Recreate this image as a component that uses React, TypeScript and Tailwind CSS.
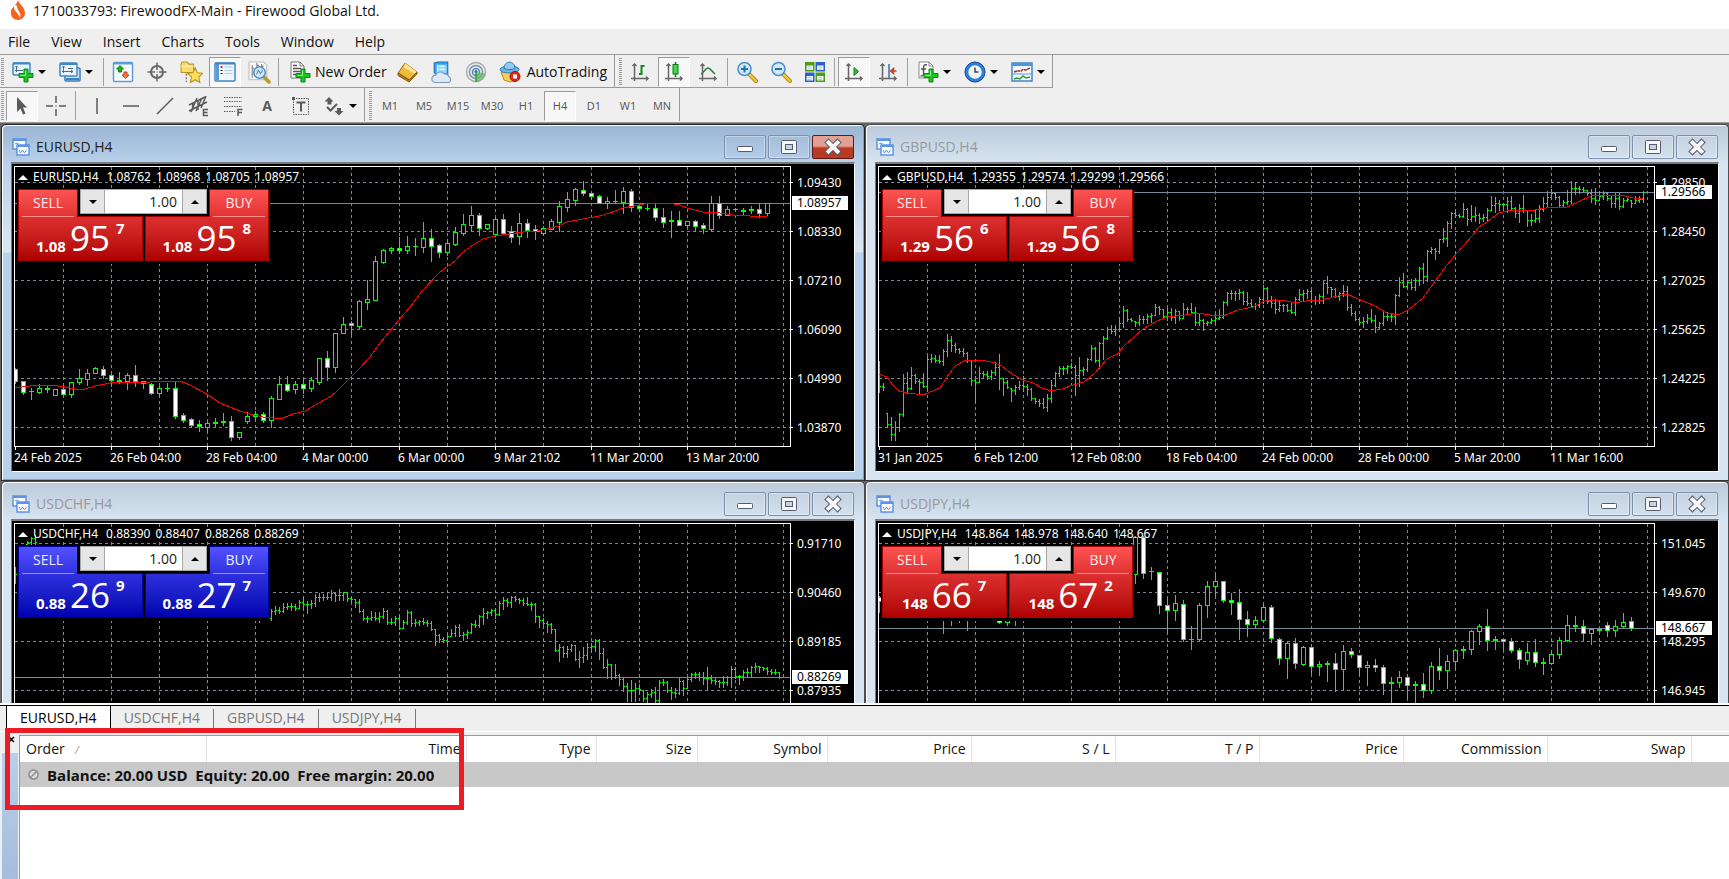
import type { ReactNode } from "react";
import clsx from "clsx";

// high, low, body top, body bottom, falling (1) or rising (0) - one candle every 8px
type Candle = [number, number, number, number, number];
// slot, high, low, close - one bar every 4px
type Bar = [number, number, number, number];

interface ChartInterface {
  symbol: string;
  quote: string[];
  prices: string[];
  current: string;
  currentY: number;
  dates: string[];
  bid: [string, string, string];
  ask: [string, string, string];
  color: "red" | "blue";
  active?: boolean;
  candles?: [number, Candle][];
  bars?: Bar[];
  average?: string;
}

const withSlots = (start: number, list: Candle[]): [number, Candle][] => list.map((c, i) => [start + i, c]);

const triples = (start: number, list: number[]): Bar[] => {
  const bars: Bar[] = [];
  for (let i = 0; i < list.length; i += 3) bars.push([start + i / 3, list[i], list[i + 1], list[i + 2]]);
  return bars;
};

const eurusd: Candle[] = [
  [201, 216, 202, 214, 1], [214, 227, 214, 225, 1], [221, 232, 224, 224, 0], [217, 226, 221, 225, 0], [219, 225, 221, 222, 0],
  [222, 228, 222, 228, 0], [220, 228, 222, 227, 1], [215, 230, 215, 227, 0], [202, 217, 211, 215, 0], [202, 218, 206, 212, 0],
  [200, 206, 201, 206, 0], [199, 211, 202, 208, 1], [207, 219, 208, 213, 1], [205, 216, 213, 214, 1], [206, 222, 208, 214, 0],
  [198, 219, 208, 214, 1], [214, 221, 214, 216, 1], [216, 227, 217, 226, 1], [219, 229, 221, 226, 0], [216, 224, 221, 221, 0],
  [215, 251, 221, 249, 1], [246, 255, 248, 253, 1], [251, 260, 252, 258, 1], [253, 264, 257, 259, 1], [254, 264, 256, 260, 0],
  [251, 259, 255, 256, 0], [246, 258, 254, 255, 0], [249, 273, 254, 270, 1], [265, 272, 265, 270, 0], [245, 256, 249, 254, 0],
  [244, 254, 247, 249, 0], [245, 255, 247, 253, 1], [229, 260, 231, 253, 0], [209, 232, 217, 232, 0], [209, 224, 217, 223, 1],
  [214, 226, 217, 222, 0], [211, 226, 217, 221, 1], [210, 224, 213, 221, 0], [191, 217, 191, 215, 0], [184, 213, 191, 200, 1],
  [166, 205, 166, 200, 0], [150, 166, 157, 166, 0], [154, 167, 156, 158, 1], [133, 161, 134, 159, 0], [113, 142, 132, 135, 0],
  [89, 133, 94, 133, 0], [82, 96, 83, 95, 0], [80, 86, 81, 83, 0], [70, 86, 81, 83, 1], [69, 86, 79, 83, 0],
  [71, 88, 79, 79, 0], [55, 85, 71, 80, 0], [62, 94, 71, 79, 1], [77, 90, 78, 85, 1], [72, 88, 76, 85, 0],
  [60, 78, 65, 77, 0], [47, 68, 57, 66, 0], [39, 64, 48, 58, 0], [46, 68, 48, 61, 1], [57, 62, 57, 61, 0],
  [50, 69, 52, 67, 0], [47, 66, 52, 66, 1], [59, 75, 64, 70, 1], [46, 77, 56, 69, 0], [52, 70, 56, 63, 1],
  [58, 72, 62, 64, 1], [59, 68, 61, 66, 0], [52, 62, 54, 62, 0], [34, 64, 39, 55, 0], [25, 44, 32, 40, 0],
  [21, 38, 22, 33, 0], [14, 28, 23, 26, 1], [25, 32, 26, 29, 1], [28, 36, 29, 36, 1], [30, 41, 34, 36, 0],
  [23, 36, 34, 34, 0], [20, 46, 24, 35, 0], [22, 44, 24, 40, 1], [37, 44, 39, 41, 1], [36, 43, 41, 41, 0],
  [37, 53, 41, 50, 1], [41, 60, 50, 55, 1], [44, 70, 53, 54, 0], [44, 58, 53, 58, 1], [54, 60, 54, 58, 0],
  [53, 64, 54, 59, 1], [56, 66, 58, 61, 1], [29, 64, 36, 62, 0], [29, 51, 36, 48, 1], [39, 48, 42, 48, 0],
  [41, 44, 42, 42, 0], [41, 47, 43, 44, 0], [39, 46, 42, 43, 0], [37, 50, 42, 46, 1], [36, 48, 36, 46, 0],
];

const eurusdAverage =
  "0,221 15,219 25,218 35,218 50,220 60,222 70,222 80,219 95,216 110,215 125,216 145,214 165,214 175,218 190,226 205,236 225,244 235,247 248,250 258,251 268,251 278,247 290,244 302,237 313,231 320,226 335,211 345,201 355,190 365,176 384,153 395,140 408,123 424,106 440,94 448,85 458,78 468,72 480,69 495,67 508,65 522,64 532,62 544,59 552,55 568,52 584,49 595,46 608,41 624,38 635,36 652,36 665,38 672,41 688,45 705,46 718,48 735,49 747,50 752,49";

const gbpusd = triples(0, [
  194, 225, 219, 216, 223, 220, 246, 260, 257, 250, 273, 267, 254, 273, 260, 246, 264, 247, 207, 249, 216, 205, 226, 221,
  200, 222, 208, 207, 216, 214, 212, 227, 215, 206, 220, 219, 189, 224, 192, 187, 195, 191, 188, 195, 193, 188, 196, 194,
  182, 198, 184, 167, 189, 173, 169, 184, 178, 176, 185, 182, 181, 186, 184, 181, 189, 186, 185, 195, 193, 193, 218, 213,
  209, 235, 215, 200, 215, 206, 204, 210, 207, 204, 212, 209, 203, 212, 205, 195, 208, 200, 187, 222, 211, 211, 228, 215,
  213, 221, 220, 221, 234, 223, 218, 227, 220, 214, 222, 218, 209, 224, 219, 217, 228, 222, 221, 233, 231, 231, 236, 234,
  232, 239, 236, 231, 241, 240, 227, 244, 231, 213, 235, 218, 205, 219, 206, 199, 209, 201, 199, 207, 201, 198, 206, 199,
  196, 201, 200, 198, 228, 208, 190, 219, 203, 200, 208, 202, 191, 204, 192, 178, 193, 181, 180, 195, 193, 175, 201, 176,
  169, 192, 171, 160, 172, 162, 158, 166, 164, 158, 168, 162, 150, 163, 156, 139, 160, 143, 142, 154, 152, 151, 154, 153,
  154, 159, 155, 148, 158, 152, 149, 156, 152, 147, 156, 149, 146, 155, 148, 137, 148, 140, 139, 147, 142, 142, 151, 149,
  141, 153, 145, 141, 153, 150, 142, 156, 144, 144, 153, 151, 136, 151, 142, 140, 146, 142, 136, 146, 145, 140, 158, 155,
  147, 158, 153, 152, 163, 156, 154, 158, 155, 151, 156, 153, 146, 155, 151, 142, 152, 150, 134, 151, 135, 125, 138, 126,
  123, 132, 126, 124, 133, 126, 122, 132, 125, 124, 137, 134, 125, 138, 136, 132, 140, 139, 136, 142, 138, 130, 140, 132,
  118, 136, 121, 120, 136, 134, 129, 140, 136, 132, 146, 142, 133, 144, 138, 137, 144, 138, 137, 144, 143, 135, 146, 145,
  130, 148, 132, 122, 133, 127, 123, 133, 126, 122, 131, 124, 122, 135, 133, 129, 137, 133, 127, 136, 129, 114, 136, 116,
  109, 126, 120, 120, 129, 122, 121, 130, 129, 125, 133, 126, 118, 129, 124, 119, 143, 140, 137, 148, 146, 144, 153, 152,
  150, 157, 155, 150, 160, 154, 147, 156, 151, 142, 155, 153, 148, 165, 160, 155, 161, 156, 145, 158, 149, 145, 153, 149,
  146, 154, 149, 127, 157, 128, 110, 129, 115, 106, 120, 119, 113, 122, 115, 112, 122, 120, 111, 123, 113, 100, 118, 101,
  96, 116, 109, 83, 114, 84, 80, 86, 82, 81, 92, 84, 72, 86, 72, 61, 75, 71, 54, 79, 56, 45, 61, 46,
  42, 50, 48, 47, 50, 49, 36, 50, 42, 41, 58, 52, 38, 54, 49, 40, 54, 48, 46, 56, 51, 47, 54, 50,
  41, 53, 43, 29, 43, 38, 30, 45, 36, 33, 43, 37, 36, 42, 37, 30, 45, 34, 29, 42, 41, 40, 50, 46,
  37, 55, 41, 28, 45, 43, 43, 59, 53, 47, 58, 53, 43, 55, 51, 38, 55, 42, 30, 44, 36, 24, 39, 30,
  22, 32, 26, 26, 32, 30, 29, 40, 38, 33, 40, 35, 23, 37, 34, 14, 37, 21, 15, 27, 21, 19, 26, 22,
  20, 25, 23, 23, 28, 26, 22, 35, 31, 21, 37, 33, 25, 33, 29, 24, 32, 26, 25, 33, 31, 29, 40, 36,
  26, 40, 31, 26, 42, 39, 31, 40, 33, 31, 34, 32, 33, 40, 36, 29, 36, 33, 29, 35, 32, 24, 35, 25,
]);

const gbpusdAverage =
  "0,207 8,210 14,218 20,224 29,226 44,228 49,226 61,221 68,210 76,199 87,193 103,193 116,196 123,199 133,207 144,213 154,216 163,221 172,224 183,222 194,218 205,215 216,206 228,192 238,187 246,178 264,162 278,154 288,150 306,148 318,146 331,148 344,149 359,143 374,140 388,133 403,133 416,136 432,133 444,133 454,130 468,127 479,132 494,138 508,146 519,148 529,143 544,131 554,117 568,98 578,86 593,69 600,60 608,55 620,46 632,43 656,43 672,40 688,40 699,35 712,29 728,28 746,29 759,32 764,31";

const usdchf: Bar[] = [
  ...triples(0, [43, 59, 50]),
  ...triples(3, [17, 20, 18, 13, 20, 14, 11, 20, 18]),
  ...triples(61, [90, 98, 94]),
  ...triples(64, [
    85, 96, 87, 82, 90, 86, 83, 89, 87, 79, 88, 83, 79, 85, 82, 79, 86, 82, 80, 86, 84, 76, 84, 78,
    73, 85, 80, 77, 89, 80, 76, 84, 79, 70, 82, 73, 69, 77, 73, 70, 76, 73, 68, 75, 73, 66, 76, 69,
    68, 77, 71, 65, 76, 71, 68, 76, 68, 68, 77, 74, 73, 78, 75, 75, 83, 78, 75, 88, 87, 85, 96, 94,
    92, 98, 94, 87, 96, 93, 88, 96, 94, 88, 98, 92, 84, 94, 87, 86, 100, 98, 94, 100, 98, 92, 101, 94,
    91, 105, 104, 96, 104, 98, 86, 100, 88, 87, 102, 99, 95, 102, 98, 96, 101, 97, 94, 100, 98, 96, 102, 99,
    97, 106, 105, 105, 121, 111, 110, 118, 115, 113, 118, 116, 111, 120, 112, 105, 112, 109, 101, 112, 103, 100, 112, 111,
    108, 116, 110, 106, 114, 108, 99, 109, 100, 96, 103, 101, 91, 103, 92, 84, 100, 89, 87, 94, 88, 85, 91, 86,
    84, 94, 90, 77, 91, 79, 73, 85, 76, 74, 82, 78, 72, 83, 73, 72, 77, 75, 74, 79, 76, 74, 81, 79,
    73, 81, 80, 78, 86, 80, 79, 98, 92, 92, 103, 96, 94, 104, 99, 97, 108, 100, 99, 109, 105, 105, 127, 126,
    120, 137, 123, 122, 133, 129, 122, 133, 125, 120, 127, 121, 121, 136, 135, 127, 143, 133, 123, 138, 131, 119, 135, 123,
    119, 128, 122, 115, 127, 116, 115, 135, 129, 124, 144, 143, 135, 154, 140, 140, 155, 153, 140, 154, 151, 150, 161, 155,
    153, 167, 162, 159, 177, 166, 156, 177, 166, 159, 177, 164, 160, 170, 165, 166, 177, 174, 168, 178, 170, 165, 173, 168,
    163, 179, 176, 156, 179, 158, 155, 161, 158, 157, 168, 166, 163, 175, 168, 164, 173, 169, 154, 170, 157, 156, 171, 164,
    154, 164, 155, 149, 157, 150, 148, 154, 150, 148, 156, 153, 148, 160, 154, 143, 165, 154, 151, 159, 156, 154, 160, 157,
    156, 163, 158, 152, 163, 158, 152, 161, 153, 142, 163, 145, 143, 154, 152, 151, 160, 152, 146, 156, 148, 144, 152, 148,
    142, 152, 143, 139, 148, 142, 142, 148, 143, 143, 146, 144, 143, 150, 147, 145, 150, 148, 145, 150, 148, 148, 154, 153,
  ]),
];

const usdjpy: [number, Candle][] = [
  ...withSlots(0, [[72, 88, 73, 77, 1]]),
  ...withSlots(8, [[90, 109, 90, 90, 0], [90, 101, 90, 90, 0], [90, 98, 90, 90, 0], [90, 106, 90, 90, 0]]),
  ...withSlots(15, [[90, 99, 90, 98, 1], [96, 101, 96, 98, 0], [90, 101, 96, 96, 0]]),
  ...withSlots(32, [
    [13, 59, 13, 50, 0], [12, 54, 13, 49, 1], [43, 55, 47, 47, 0], [48, 89, 48, 81, 1], [74, 108, 81, 86, 1],
    [71, 96, 79, 86, 0], [76, 117, 80, 115, 1], [102, 125, 115, 115, 0], [79, 117, 81, 115, 0], [57, 93, 62, 81, 0],
    [50, 71, 57, 62, 0], [57, 78, 57, 76, 1], [69, 90, 76, 78, 1], [65, 115, 78, 95, 1], [87, 112, 95, 100, 1],
    [92, 103, 96, 100, 0], [80, 98, 83, 96, 0], [81, 118, 83, 114, 1], [114, 140, 115, 134, 1], [117, 154, 119, 134, 0],
    [114, 144, 119, 139, 1], [122, 141, 123, 140, 0], [122, 149, 123, 142, 1], [137, 151, 140, 142, 0], [137, 157, 139, 140, 0],
    [129, 167, 139, 145, 1], [121, 166, 127, 145, 0], [124, 133, 127, 130, 1], [131, 151, 131, 143, 1], [137, 161, 141, 143, 0],
    [135, 147, 141, 143, 1], [141, 170, 143, 159, 1], [153, 178, 158, 159, 0], [147, 163, 153, 158, 0], [150, 174, 153, 161, 1],
    [157, 179, 160, 161, 0], [149, 173, 160, 166, 1], [138, 169, 142, 166, 0], [124, 155, 142, 146, 1], [131, 164, 137, 146, 0],
    [125, 145, 126, 137, 0], [122, 134, 125, 126, 0], [106, 130, 107, 125, 0], [100, 120, 102, 107, 0], [85, 126, 102, 116, 1],
    [112, 125, 115, 116, 0], [115, 125, 115, 117, 1], [114, 128, 117, 126, 1], [124, 144, 126, 135, 1], [119, 140, 128, 136, 0],
    [115, 142, 128, 138, 1], [134, 150, 138, 139, 0], [128, 140, 130, 139, 0], [113, 134, 116, 130, 0], [91, 117, 101, 116, 0],
    [92, 107, 101, 102, 0], [96, 116, 102, 109, 1], [104, 120, 105, 109, 0], [104, 107, 105, 106, 0], [98, 112, 101, 106, 1],
    [96, 112, 102, 106, 0], [89, 103, 98, 102, 0], [93, 106, 97, 104, 1],
  ]),
];

const charts: ChartInterface[] = [
  {
    symbol: "EURUSD,H4",
    quote: ["1.08762", "1.08968", "1.08705", "1.08957"],
    prices: ["1.09430", "1.08330", "1.07210", "1.06090", "1.04990", "1.03870"],
    current: "1.08957",
    currentY: 36,
    dates: ["24 Feb 2025", "26 Feb 04:00", "28 Feb 04:00", "4 Mar 00:00", "6 Mar 00:00", "9 Mar 21:02", "11 Mar 20:00", "13 Mar 20:00"],
    bid: ["1.08", "95", "7"],
    ask: ["1.08", "95", "8"],
    color: "red",
    active: true,
    candles: withSlots(0, eurusd),
    average: eurusdAverage,
  },
  {
    symbol: "GBPUSD,H4",
    quote: ["1.29355", "1.29574", "1.29299", "1.29566"],
    prices: ["1.29850", "1.28450", "1.27025", "1.25625", "1.24225", "1.22825"],
    current: "1.29566",
    currentY: 25,
    dates: ["31 Jan 2025", "6 Feb 12:00", "12 Feb 08:00", "18 Feb 04:00", "24 Feb 00:00", "28 Feb 00:00", "5 Mar 20:00", "11 Mar 16:00"],
    bid: ["1.29", "56", "6"],
    ask: ["1.29", "56", "8"],
    color: "red",
    bars: gbpusd,
    average: gbpusdAverage,
  },
  {
    symbol: "USDCHF,H4",
    quote: ["0.88390", "0.88407", "0.88268", "0.88269"],
    prices: ["0.91710", "0.90460", "0.89185", "0.87935"],
    current: "0.88269",
    currentY: 153,
    dates: [],
    bid: ["0.88", "26", "9"],
    ask: ["0.88", "27", "7"],
    color: "blue",
    bars: usdchf,
  },
  {
    symbol: "USDJPY,H4",
    quote: ["148.864", "148.978", "148.640", "148.667"],
    prices: ["151.045", "149.670", "148.295", "146.945"],
    current: "148.667",
    currentY: 104,
    dates: [],
    bid: ["148", "66", "7"],
    ask: ["148", "67", "2"],
    color: "red",
    candles: usdjpy,
  },
];

const Icon = ({ children, size = 22 }: { children: ReactNode; size?: number }) => (
  <svg width={size} height={size} viewBox="0 0 22 22" fill="none" className="shrink-0" aria-hidden="true">
    {children}
  </svg>
);

const Plus = () => (
  <g>
    <path d="M12 8h4v4.500h5v4h-5V21h-4v-4.500H7v-4h5z" fill="#1fc21f" stroke="#0b8a12" />
    <path d="M13.500 9.500v5H8.500" stroke="#8df58d" />
  </g>
);

const ChartAxes = () => (
  <g stroke="#666" strokeWidth="1.500">
    <path d="M5.500 3v17M2 17.500h17" />
    <path d="M3.500 5L5.500 3l2 2M17 15.500l2 2-2 2" />
  </g>
);

const Magnifier = ({ plus }: { plus?: boolean }) => (
  <Icon>
    <path d="M13.500 13.500l6.500 6.500" stroke="#b8860b" strokeWidth="4" strokeLinecap="round" />
    <path d="M13.500 13.500l6.500 6.500" stroke="#f7cf3e" strokeWidth="2" strokeLinecap="round" />
    <circle cx="8.500" cy="8" r="6.500" fill="#cfeafb" stroke="#4c8fc9" strokeWidth="1.500" />
    <path d={plus ? "M5 8h7M8.500 4.500v7" : "M5 8h7"} stroke="#2670b0" strokeWidth="2" />
  </Icon>
);

const NewChartIcon = () => (
  <Icon>
    <rect x="1" y="2" width="17" height="12" rx="1" fill="#e9f3fc" stroke="#3f86c6" strokeWidth="1.500" />
    <path d="M1 2.500h17" stroke="#3f86c6" strokeWidth="2" />
    <path d="M4.500 5v6M3 9.500h8M3 6.500L4.500 5 6 6.500" stroke="#4b6b8c" />
    <Plus />
  </Icon>
);

const ProfilesIcon = () => (
  <Icon>
    <rect x="6" y="7" width="15" height="13" rx="1" fill="#cfe2f4" stroke="#3f7fbe" strokeWidth="1.500" />
    <path d="M7 18h13" stroke="#3f7fbe" strokeWidth="2" />
    <rect x="1" y="2" width="17" height="13" rx="1" fill="#eef6fd" stroke="#3f86c6" strokeWidth="1.500" />
    <path d="M1 3h17" stroke="#3f86c6" strokeWidth="2" />
    <path d="M4.500 5v7M3 10.500h11M3 6.500L4.500 5 6 6.500M12 9l2 1.500-2 1.500M9 7.500h5" stroke="#4b6b8c" />
  </Icon>
);

const MarketWatchIcon = () => (
  <Icon>
    <rect x="1.500" y="1.500" width="19" height="19" rx="1" fill="#fff" stroke="#5b9bd8" strokeWidth="1.500" />
    <path d="M2 2.500h18" stroke="#5b9bd8" strokeWidth="2" />
    <path d="M4 7h14M4 10h14M4 13h14M4 16h14" stroke="#dbe8f5" />
    <path d="M8 4.500l3.500 3.500H9.500v3h-3V8h-2z" fill="#25b325" stroke="#0b7a12" />
    <path d="M13.500 17.500l3.500-3.500h-2v-3h-3v3h-2z" fill="#ff7a45" stroke="#c83a10" />
  </Icon>
);

const TargetIcon = () => (
  <Icon>
    <circle cx="11" cy="11" r="6" stroke="#666" strokeWidth="2" />
    <path d="M11 1.500v7.500M11 13v7.500M1.500 11H9M13 11h7.500" stroke="#666" strokeWidth="1.500" />
    <path d="M10.500 11h1" stroke="#666" />
  </Icon>
);

const FavouritesIcon = () => (
  <Icon size={23}>
    <path d="M1 3l1-2h5l1.500 2H13v8H1z" fill="#f8dc6c" stroke="#b8922a" />
    <path d="M1 5h12" stroke="#fff2b0" />
    <path d="M6 12v8" stroke="#555" strokeDasharray="2 1.500" />
    <path d="M14.500 6.500l2.200 4.700 5 .6-3.700 3.500 1 5.200-4.500-2.600L10 20.500l1-5.200-3.700-3.500 5-.6z" fill="#ffdf5a" stroke="#b8922a" />
  </Icon>
);

const NavigatorIcon = () => (
  <Icon>
    <rect x="1" y="2" width="20" height="18" rx="1" fill="#fff" stroke="#3f86c6" strokeWidth="1.500" />
    <path d="M8 3h12v16H8z" fill="#eef5fc" />
    <path d="M2 3h3v16H2z" fill="#5b9bd8" />
    <path d="M1 2.500h20" stroke="#3f86c6" strokeWidth="2" />
    <rect x="6.500" y="5" width="2" height="2" fill="#e0262c" />
    <path d="M6.500 9.500h2M6.500 12.500h2" stroke="#222" />
    <path d="M10.500 6h8M10.500 9.500h8M10.500 12.500h8" stroke="#a9c9ea" />
  </Icon>
);

const TesterIcon = () => (
  <Icon size={23}>
    <path d="M1 1h14l3 3v14H1z" fill="#fafafa" stroke="#bbb" />
    <path d="M4 4v12M4 7h2M8.500 2v8M8.500 4h2M13 3v9M13 5h2" stroke="#777" />
    <path d="M15 15l5 5" stroke="#c79a1c" strokeWidth="3.500" strokeLinecap="round" />
    <circle cx="11" cy="11" r="5.500" fill="#cfe6fa" fillOpacity=".85" stroke="#4c8fc9" strokeWidth="1.500" />
    <path d="M8 13l2-4 2 3 2-3" stroke="#5a8fc0" />
  </Icon>
);

const OrderIcon = () => (
  <Icon>
    <path d="M2 1h9l4 4v12H2z" fill="#fff" stroke="#777" />
    <path d="M11 1v4h4" stroke="#777" />
    <path d="M4 4.500h4M4 7.500h8M4 10.500h8M4 13.500h5" stroke="#555" strokeWidth="1.500" />
    <Plus />
  </Icon>
);

const MetaEditorIcon = () => (
  <Icon>
    <path d="M8 2l12 9-7 8L1 12z" fill="#eebb3c" stroke="#9c6d10" />
    <path d="M8 2l12 9-3 1.500L7 6.500z" fill="#fbe392" />
    <path d="M1 12v2.500L12 21l8-8v-2l-8 8z" fill="#b87a14" stroke="#8a5d0c" />
  </Icon>
);

const MarketIcon = () => (
  <Icon size={23}>
    <path d="M4 2l3-1h10v12H6l-2-2z" fill="#2da2f0" stroke="#1b72b8" />
    <path d="M7 3.500h9v8H7z" fill="#9ad6fb" />
    <path d="M9 5h5M9 8h5M7 3.500v9" stroke="#fff" />
    <path d="M5 20.500a3.500 3.500 0 01.5-7 5 5 0 018.500-1 4 4 0 014 2.500 3 3 0 010 5.500z" fill="#dfe9f5" stroke="#7d98bd" />
  </Icon>
);

const SignalIcon = () => (
  <Icon>
    <circle cx="11" cy="11" r="9.500" fill="#e9edf0" stroke="#a3adb3" strokeWidth="1.500" />
    <circle cx="11" cy="11" r="6.500" stroke="#84929c" strokeWidth="1.500" />
    <circle cx="11" cy="11" r="3.500" stroke="#4f87c0" strokeWidth="1.500" />
    <path d="M11 11v10c5-.5 8.500-4 9.500-8.500z" fill="#5dbb5d" fillOpacity=".7" />
    <circle cx="11" cy="10.500" r="1.500" fill="#2a6fc0" />
    <path d="M11 11v10" stroke="#28a428" strokeWidth="1.500" />
  </Icon>
);

const AutoTradingIcon = () => (
  <Icon>
    <path d="M2 11l3 8 6 2 6-2 2-8z" fill="#f6cf55" stroke="#b58a1e" />
    <ellipse cx="10.500" cy="8.500" rx="9.500" ry="3.500" fill="#6eb5e6" stroke="#2f7ab5" />
    <path d="M5 7.500c0-8.500 11-8.500 11 0-3 1.500-8 1.500-11 0z" fill="#8ccaf2" stroke="#2f7ab5" />
    <circle cx="16" cy="15.500" r="5" fill="#e0291d" stroke="#a31109" />
    <rect x="14" y="13.500" width="4" height="4" fill="#fff" />
  </Icon>
);

const BarChartIcon = () => (
  <Icon>
    <ChartAxes />
    <path d="M12.500 4v10M12.500 5h3M10 13h2.500" stroke="#148a1e" strokeWidth="2" />
  </Icon>
);

const CandleChartIcon = () => (
  <Icon>
    <ChartAxes />
    <path d="M12.500 1v15" stroke="#0b7a12" strokeWidth="1.500" />
    <rect x="10" y="3.500" width="5" height="9.500" fill="#3fd84a" stroke="#0b7a12" />
  </Icon>
);

const LineChartIcon = () => (
  <Icon>
    <ChartAxes />
    <path d="M4 13c3-1 4-6 7-6 2.500 0 4 4 7 6" stroke="#2f7a3a" strokeWidth="1.500" />
  </Icon>
);

const TileIcon = () => (
  <Icon>
    {[
      [1, 1, "#4a9e12"],
      [11.5, 1, "#2b62c9"],
      [1, 11.5, "#2b62c9"],
      [11.5, 11.5, "#4a9e12"],
    ].map(([x, y, fill]) => (
      <g key={`${x}-${y}`} transform={`translate(${x} ${y})`}>
        <rect width="9.500" height="9.500" fill={String(fill)} />
        <rect x="1.500" y="3.500" width="6.500" height="4.500" fill="#eef4fb" />
        <path d="M2.500 5h4M2.500 7h4" stroke="#b4c8dc" />
      </g>
    ))}
  </Icon>
);

const AutoScrollIcon = () => (
  <Icon>
    <ChartAxes />
    <path d="M11 6.500l4.500 4-4.500 4z" fill="#35c23f" stroke="#0b7a12" />
  </Icon>
);

const ShiftIcon = () => (
  <Icon>
    <ChartAxes />
    <path d="M12 3v14" stroke="#2f75b0" strokeWidth="1.500" />
    <path d="M13.500 10l3-2.500v5zM16 10h3.500" fill="#d2451e" stroke="#c04a20" strokeWidth="1.500" />
  </Icon>
);

const IndicatorIcon = () => (
  <Icon>
    <path d="M2 1h10l4 4v12H2z" fill="#fff" stroke="#888" />
    <path d="M12 1v4h4" stroke="#888" />
    <path d="M10 4c-3-1-3.500 1-3.500 3v6c0 2-1 2-3 2M4 8h5" stroke="#555" strokeWidth="1.500" />
    <Plus />
  </Icon>
);

const ClockIcon = () => (
  <Icon>
    <circle cx="11" cy="11" r="8.500" fill="#eef3f8" stroke="#2f7fd8" strokeWidth="3.500" />
    <circle cx="11" cy="11" r="10" stroke="#174f93" />
    <path d="M11 6.500V11h3.500" stroke="#444" strokeWidth="1.500" />
  </Icon>
);

const TemplateIcon = () => (
  <Icon>
    <rect x="1" y="2" width="20" height="18" fill="#f3f8fd" stroke="#3f86c6" strokeWidth="1.500" />
    <rect x="1" y="2" width="20" height="3" fill="#4c97dc" />
    <path d="M3 11l3-1h4l2-1.500 3 .5 4-2" stroke="#a3261b" strokeWidth="1.500" strokeDasharray="3 .5" />
    <path d="M2 13h18" stroke="#5b9bd8" />
    <path d="M3 18l3-1 3 1 3-3 3 2 4-1" stroke="#2f9a3a" strokeWidth="1.500" />
  </Icon>
);

const Caret = () => <span className="h-0 w-0 border-x-4 border-t-4 border-x-transparent border-t-black" />;

const Separator = () => <span className="mx-[3px] my-px w-px self-stretch bg-[#a0a0a0]" />;

const Grip = () => (
  <span className="my-px mr-[2px] w-[3px] self-stretch bg-[repeating-linear-gradient(to_bottom,#9a9a9a_0_1px,#efefef_1px_2px)]" />
);

interface ToolInterface {
  label: string;
  children: ReactNode;
  pressed?: boolean;
}

const Tool = ({ label, children, pressed }: ToolInterface) => (
  <button
    type="button"
    aria-label={label}
    className={clsx(
      "flex h-[30px] w-[32px] items-center justify-center border",
      pressed ? "border-t-[#9a9a9a] border-l-[#9a9a9a] border-r-white border-b-white bg-[#f7f7f7]" : "border-transparent",
    )}
  >
    {children}
  </button>
);

const DropTool = ({ label, children }: ToolInterface) => (
  <button type="button" aria-label={label} className="flex h-[30px] w-[47px] items-center gap-1 pl-[6px]">
    {children}
    <Caret />
  </button>
);

const Toolbar = ({ children, last }: { children: ReactNode; last?: boolean }) => (
  <div className={clsx("flex h-[33px] items-center border-r border-r-[#9a9a9a] pt-[2px] pl-[4px] first:pl-px", !last && "border-b border-b-[#9a9a9a]")}>
    <Grip />
    {children}
  </div>
);

const timeframes = ["M1", "M5", "M15", "M30", "H1", "H4", "D1", "W1", "MN"];
const menus = ["File", "View", "Insert", "Charts", "Tools", "Window", "Help"];

const StandardToolbar = () => (
  <div className="flex h-[34px] border-t border-t-[#9a9a9a]">
    <Toolbar>
      <DropTool label="New chart"><NewChartIcon /></DropTool>
      <DropTool label="Profiles"><ProfilesIcon /></DropTool>
      <Separator />
      <div className="flex gap-[2px]">
        <Tool label="Market watch"><MarketWatchIcon /></Tool>
        <Tool label="Data window"><TargetIcon /></Tool>
        <Tool label="Favourites"><FavouritesIcon /></Tool>
        <Tool label="Terminal" pressed><NavigatorIcon /></Tool>
        <Tool label="Strategy tester"><TesterIcon /></Tool>
      </div>
      <Separator />
      <button type="button" className="flex h-[30px] items-center gap-1 pr-[5px] pl-[7px]">
        <OrderIcon />
        New Order
      </button>
      <div className="flex gap-[2px]">
        <Tool label="MetaEditor"><MetaEditorIcon /></Tool>
        <Tool label="Market"><MarketIcon /></Tool>
        <Tool label="Signals"><SignalIcon /></Tool>
      </div>
      <button type="button" className="flex h-[30px] items-center gap-[6px] pr-[7px] pl-[7px]">
        <AutoTradingIcon />
        AutoTrading
      </button>
    </Toolbar>
    <Toolbar>
      <div className="flex gap-[2px]">
        <Tool label="Bar chart"><BarChartIcon /></Tool>
        <Tool label="Candlesticks" pressed><CandleChartIcon /></Tool>
        <Tool label="Line chart"><LineChartIcon /></Tool>
      </div>
      <Separator />
      <div className="flex gap-[2px]">
        <Tool label="Zoom in"><Magnifier plus /></Tool>
        <Tool label="Zoom out"><Magnifier /></Tool>
        <Tool label="Tile windows"><TileIcon /></Tool>
      </div>
      <Separator />
      <div className="flex gap-[2px]">
        <Tool label="Auto scroll" pressed><AutoScrollIcon /></Tool>
        <Tool label="Chart shift"><ShiftIcon /></Tool>
      </div>
      <Separator />
      <DropTool label="Indicators"><IndicatorIcon /></DropTool>
      <DropTool label="Periods"><ClockIcon /></DropTool>
      <DropTool label="Templates"><TemplateIcon /></DropTool>
    </Toolbar>
  </div>
);

const DrawingToolbar = () => (
  <div className="flex h-[35px] border-b border-b-[#9a9a9a]">
    <Toolbar last>
      <div className="flex gap-[2px]">
        <Tool label="Cursor" pressed>
          <Icon><path d="M6 2v15l3.500-3.500 2.500 6 2.500-1-2.500-6h4z" fill="#5a5a5a" /></Icon>
        </Tool>
        <Tool label="Crosshair">
          <Icon><path d="M11 1v7M11 14v7M1 11h7M14 11h7M10.500 11h1" stroke="#5a5a5a" strokeWidth="1.500" /></Icon>
        </Tool>
      </div>
      <Separator />
      <div className="flex gap-[2px] pl-[2px]">
        <Tool label="Vertical line">
          <Icon><path d="M11 3v16" stroke="#5a5a5a" strokeWidth="1.500" /></Icon>
        </Tool>
        <Tool label="Horizontal line">
          <Icon><path d="M3 11h16" stroke="#5a5a5a" strokeWidth="1.500" /></Icon>
        </Tool>
        <Tool label="Trendline">
          <Icon><path d="M3 19L19 3" stroke="#5a5a5a" strokeWidth="1.500" /></Icon>
        </Tool>
        <Tool label="Equidistant channel">
          <Icon>
            <path d="M1 10L17 2M1 16L19 7M3 17L9 3M8 16l6-13M13 13l5-12M5 8l-1 8M10 5v10" stroke="#5a5a5a" strokeWidth="1.500" />
            <path d="M20 14.500h-4.500v6H20M15.500 17.500h4" stroke="#5a5a5a" strokeWidth="1.500" />
          </Icon>
        </Tool>
        <Tool label="Fibonacci retracement">
          <Icon>
            <path d="M2 2.500h18M2 6.500h18M2 11.500h18M2 16.500h11" stroke="#5a5a5a" strokeDasharray="1.500 1" />
            <path d="M20.500 14.500H16V21M16 17.500h4" stroke="#5a5a5a" strokeWidth="1.500" />
          </Icon>
        </Tool>
        <Tool label="Text">
          <span className="text-sm font-bold text-[#5a5a5a]">A</span>
        </Tool>
        <Tool label="Text label">
          <Icon>
            <rect x="3.500" y="3.500" width="15" height="16" stroke="#5a5a5a" strokeDasharray="1.500 1" />
            <path d="M6.500 7.500h9M11 7.500v9" stroke="#5a5a5a" strokeWidth="2" />
            <rect x="2" y="2" width="3" height="3" fill="#5a5a5a" />
          </Icon>
        </Tool>
      </div>
      <DropTool label="Arrows">
        <Icon>
          <path d="M6 2l4.500 4.500H8.500v3h-4v-3H1.500zM16 20.500L11.500 16h2.500v-3h4v3h2.500z" fill="#5a5a5a" />
          <path d="M4 12l3.500 3.500L14 9" stroke="#5a5a5a" strokeWidth="2" />
        </Icon>
      </DropTool>
    </Toolbar>
    <Toolbar last>
      <div className="flex gap-[2px] pr-px text-[11px] font-medium text-[#555]">
        {timeframes.map((t) => (
          <Tool key={t} label={t} pressed={t === "H4"}>{t}</Tool>
        ))}
      </div>
    </Toolbar>
  </div>
);

const PriceButton = ({ value, color, label }: { value: [string, string, string]; color: "red" | "blue"; label: string }) => (
  <button
    type="button"
    aria-label={label}
    className={clsx(
      "flex h-[45px] flex-1 items-start justify-center gap-1 border text-white",
      color === "red" ? "border-[#a80000] bg-linear-to-b from-[#dd2f2f] to-[#ae0000]" : "border-[#0000a0] bg-linear-to-b from-[#2f2fdd] to-[#0000ae]",
    )}
  >
    <span className="pt-[19px] text-[15px] leading-5 font-bold">{value[0]}</span>
    <span className="text-[35px] leading-[42px]">{value[1]}</span>
    <span className="pl-[2px] text-[15px] leading-[22px] font-bold">{value[2]}</span>
  </button>
);

const SideButton = ({ children, color }: { children: ReactNode; color: "red" | "blue" }) => (
  <button
    type="button"
    className={clsx(
      "z-10 -mb-px h-[28px] w-[60px] border border-b-0 px-[3px] text-white/90",
      color === "red" ? "border-[#a80000] bg-linear-to-b from-[#ff5252] to-[#df3131]" : "border-[#0000a0] bg-linear-to-b from-[#5252ff] to-[#3131df]",
    )}
  >
    <span className={clsx("block border-b leading-[26px]", color === "red" ? "border-[#ff9090]" : "border-[#9090ff]")}>{children}</span>
  </button>
);

const TradePanel = ({ chart }: { chart: ChartInterface }) => (
  <div className="absolute top-[21px] left-[2px] w-[253px] bg-black px-px pt-px pb-[3px]">
    <div className="flex justify-between">
      <SideButton color={chart.color}>SELL</SideButton>
      <div className="flex h-[25px] w-[127px] border border-[#a8a8a8] bg-white">
        <button type="button" aria-label="Decrease volume" className="flex w-[24px] items-center justify-center border-r border-[#a8a8a8] bg-[#e6e6e6]">
          <Caret />
        </button>
        <input aria-label="Volume" defaultValue="1.00" className="min-w-0 flex-1 px-[5px] text-right text-sm text-[#222] outline-none" />
        <button type="button" aria-label="Increase volume" className="flex w-[24px] items-center justify-center border-l border-[#a8a8a8] bg-[#e6e6e6]">
          <span className="h-0 w-0 border-x-4 border-b-4 border-x-transparent border-b-black" />
        </button>
      </div>
      <SideButton color={chart.color}>BUY</SideButton>
    </div>
    <div className="flex gap-[2px]">
      <PriceButton value={chart.bid} color={chart.color} label="Sell by market" />
      <PriceButton value={chart.ask} color={chart.color} label="Buy by market" />
    </div>
  </div>
);

const Plot = ({ chart }: { chart: ChartInterface }) => {
  const id = chart.symbol.slice(0, 6);
  return (
    <svg className="absolute inset-0 h-full w-full" shapeRendering="crispEdges" role="img" aria-label={`${chart.symbol} chart`}>
      <defs>
        <pattern id={`${id}-v`} x="48" width="48" height="6" patternUnits="userSpaceOnUse">
          <rect width="1" height="3" fill="#778899" />
        </pattern>
        <pattern id={`${id}-h`} y="15" width="6" height="49" patternUnits="userSpaceOnUse">
          <rect width="3" height="1" fill="#778899" />
        </pattern>
        <pattern id={`${id}-h2`} y="19" width="6" height="49" patternUnits="userSpaceOnUse">
          <rect width="3" height="1" fill="#778899" />
        </pattern>
      </defs>
      <rect x="1" width="100%" height="100%" fill={`url(#${id}-v)`} />
      <rect width="100%" height="100%" fill={`url(#${id}-${chart.dates.length ? "h" : "h2"})`} />
      <rect y={chart.currentY} width="100%" height="1" fill="#778899" />
      {chart.candles?.map(([slot, [high, low, top, bottom, falling]]) => (
        <g key={slot} transform={`translate(${slot * 8} 0)`}>
          <rect y={high} width="1" height={low - high + 1} fill="#0f0" />
          <rect x="-2" y={top} width="5" height={bottom - top + 1} fill="#0f0" />
          {bottom - top > 1 && <rect x="-1" y={top + 1} width="3" height={bottom - top - 1} fill={falling ? "#fff" : "#000"} />}
        </g>
      ))}
      {chart.bars?.map(([slot, high, low, close], i, all) => (
        <g key={slot} transform={`translate(${slot * 4} 0)`} fill="#0f0">
          <rect y={high} width="1" height={low - high + 1} />
          <rect x="1" y={close} width="1" height="1" />
          {i > 0 && <rect x="-1" y={Math.min(Math.max(all[i - 1][3], high), low)} width="1" height="1" />}
        </g>
      ))}
      {chart.average && <polyline points={chart.average} fill="none" stroke="#f00" />}
    </svg>
  );
};

const WindowButton = ({ label, close, children }: { label: string; close?: boolean; children: ReactNode }) => (
  <button
    type="button"
    aria-label={label}
    className={clsx(
      "flex h-[24px] w-[42px] items-center justify-center rounded-[2px] border",
      close ? "border-[#5b1a1a] bg-linear-to-b from-[#e3a195] from-45% to-[#b93a22] to-55%" : "border-[#7d90ab] shadow-[inset_0_0_0_1px_rgba(255,255,255,0.35)]",
    )}
  >
    <svg width="20" height="18" viewBox="0 0 20 18" fill="none" aria-hidden="true">
      {children}
    </svg>
  </button>
);

const WindowIcon = () => (
  <svg width="18" height="18" viewBox="0 0 18 18" fill="none" aria-hidden="true">
    <rect x="1" y="1" width="13" height="10" fill="#fff" stroke="#5b93e6" strokeWidth="1.500" />
    <path d="M1 2h13" stroke="#5b93e6" strokeWidth="2" />
    <rect x="5" y="7" width="12" height="10" fill="#fff" stroke="#5b93e6" strokeWidth="1.500" />
    <path d="M5 8h12" stroke="#5b93e6" strokeWidth="2" />
    <path d="M3 6l2-1 2 1M7 12l1.500 3 2-3 2 3 2-3" stroke="#5b93e6" />
  </svg>
);

const ChartWindow = ({ chart }: { chart: ChartInterface }) => (
  <section
    className={clsx(
      "flex h-[357px] min-w-0 flex-col rounded-t-[5px] border border-b-[#333] px-[9px] pb-[8px]",
      chart.active
        ? "border-[#222] bg-[linear-gradient(to_bottom,#9ab4d2_0px,#b9d1ea_38px,#dbe6f3_127px,#b9d1ea_128px)] shadow-[inset_1px_1px_0_#fff,inset_-1px_-1px_0_#2fc4dc]"
        : "border-[#4d4d4d] bg-[linear-gradient(to_bottom,#bccad9_0px,#d7e4f2_38px)] shadow-[inset_1px_1px_0_#fff]",
    )}
  >
    <header className="flex h-[37px] shrink-0 items-center px-px pt-[10px] pb-1">
      <WindowIcon />
      <h2 className={clsx("flex-1 pl-[6px] text-sm", chart.active ? "text-[#222]" : "text-[#999]")}>{chart.symbol}</h2>
      <div className="flex gap-[2px]">
        <WindowButton label="Minimize">
          <rect x="2.500" y="8.500" width="15" height="5" rx="1" fill="#fff" stroke="#555a6e" />
        </WindowButton>
        <WindowButton label="Maximize">
          <rect x="2.500" y="2.500" width="15" height="13" rx="1" fill="#f6f6f6" stroke="#555a6e" />
          <rect x="6.500" y="6.500" width="7" height="5" fill="#c3d3e6" stroke="#555a6e" />
        </WindowButton>
        <WindowButton label="Close" close={chart.active}>
          <path d="M5.500 4.500l9 9M14.500 4.500l-9 9" stroke="#555a6e" strokeWidth="6" strokeLinecap="square" />
          <path d="M5.500 4.500l9 9M14.500 4.500l-9 9" stroke="#f5f5f5" strokeWidth="4" strokeLinecap="square" />
        </WindowButton>
      </div>
    </header>
    <div className="flex flex-1 flex-col border border-t-2 border-t-[#7a7a7a] border-r-white border-b-white border-l-[#7a7a7a] bg-black pt-[2px] pl-[2px] font-['Noto_Sans','DejaVu_Sans_Condensed',sans-serif] text-xs text-white">
      <div className="flex h-[281px]">
        <div className="relative min-w-0 flex-1 border border-white">
          <div className="absolute inset-0 overflow-hidden">
            <Plot chart={chart} />
          </div>
          <div className="absolute top-[2px] left-[3px] flex items-center gap-[5px]">
            <span className="h-0 w-0 border-x-[5px] border-b-[5px] border-x-transparent border-b-white" />
            <span className="pr-[3px]">{chart.symbol}</span>
            {chart.quote.map((value) => (
              <span key={value}>{value}</span>
            ))}
          </div>
          <div className="font-['Open_Sans',sans-serif] text-sm">
            <TradePanel chart={chart} />
          </div>
        </div>
        <div className={clsx("relative w-[63px]", chart.dates.length ? "-mt-[8px]" : "-mt-[4px]")}>
          {chart.prices.map((price) => (
            <div key={price} className="flex h-[49px] items-center gap-1">
              <span className="h-px w-[2px] bg-white" />
              {price}
            </div>
          ))}
          <div
            className="absolute left-px h-[14px] w-[56px] bg-white pl-[5px] leading-[14px] text-black"
            style={{ top: chart.currentY + (chart.dates.length ? 2 : -2) }}
          >
            {chart.current}
          </div>
        </div>
      </div>
      <div className="flex">
        {chart.dates.map((date) => (
          <div key={date} className="w-[96px] whitespace-nowrap">
            <span className="ml-px block h-[3px] w-px bg-white" />
            {date}
          </div>
        ))}
      </div>
    </div>
  </section>
);

const columns = [
  { name: "Time", width: "w-[260px]" },
  { name: "Type", width: "w-[130px]" },
  { name: "Size", width: "w-[101px]" },
  { name: "Symbol", width: "w-[130px]" },
  { name: "Price", width: "w-[144px]" },
  { name: "S / L", width: "w-[144px]" },
  { name: "T / P", width: "w-[144px]" },
  { name: "Price", width: "w-[144px]" },
  { name: "Commission", width: "w-[144px]" },
  { name: "Swap", width: "w-[144px]" },
];

const ChartTabs = () => (
  <nav className="flex h-[27px] border-t border-t-black pl-[6px] shadow-[inset_0_-1px_0_#fff]">
    {["EURUSD,H4", "USDCHF,H4", "GBPUSD,H4", "USDJPY,H4"].map((tab, i) =>
      i === 0 ? (
        <button key={tab} type="button" className="h-[25px] border-x border-black bg-white px-[13px] pb-[2px] text-black">
          {tab}
        </button>
      ) : (
        <button key={tab} type="button" className="my-[3px] border-r border-[#777] px-[13px] pb-[2px] leading-none text-[#777]">
          {tab}
        </button>
      ),
    )}
  </nav>
);

const Terminal = () => (
  <div className="flex flex-1 pt-[3px]">
    <div className="flex w-[19px] flex-col pl-[2px]">
      <button type="button" aria-label="Close terminal" className="flex h-[18px] items-start justify-end pr-1">
        <svg width="7" height="9" viewBox="0 0 7 9" aria-hidden="true">
          <path d="M1 2l5 5M6 2L1 7" stroke="#000" strokeWidth="1.500" />
        </svg>
      </button>
      <div className="mr-px flex-1 bg-linear-to-b from-[#b8d0ea] to-[#a5bddb]" />
    </div>
    <div className="min-w-0 flex-1 overflow-hidden border-t border-l border-[#9a9a9a] bg-white">
      <table className="w-full table-fixed border-collapse">
        <thead>
          <tr className="h-[26px]">
            <th className="w-[186px] border-r border-[#e2e2e2] pl-[6px] text-left font-normal">
              Order <span className="pl-2 text-[10px] text-[#777]">⁄</span>
            </th>
            {columns.map(({ name, width }, i) => (
              <th key={i} className={clsx("border-r border-[#e2e2e2] pr-[5px] text-right font-normal", width)}>
                {name}
              </th>
            ))}
            <th aria-hidden="true" />
          </tr>
        </thead>
        <tbody>
          <tr className="h-[25px] bg-[#c8c8c8]">
            <td colSpan={12} className="pl-[8px] text-[15px] leading-5 font-bold">
              <div className="flex items-center gap-[8px] whitespace-pre">
                <svg width="11" height="11" viewBox="0 0 11 11" fill="none" stroke="#8a8a8a" strokeWidth="1.500" aria-hidden="true">
                  <circle cx="5.500" cy="5.500" r="4.500" fill="#ddd" />
                  <path d="M2.500 8.500l6-6" />
                </svg>
                {"Balance: 20.00 USD  Equity: 20.00  Free margin: 20.00"}
              </div>
            </td>
          </tr>
        </tbody>
      </table>
    </div>
  </div>
);

export default function App() {
  return (
    <div className="flex min-h-screen flex-col overflow-hidden bg-[#efefef] font-['Open_Sans',sans-serif] text-sm text-[#111]">
      <header className="flex h-[29px] items-start gap-[7px] bg-white pl-[10px]">
        <svg width="16" height="21" viewBox="0 0 16 21" aria-hidden="true">
          <path d="M8 0c1 4 7 7 7 13 0 4-3 7-7 7s-7-3-7-7C1 7 7 5 8 0z" fill="#f26522" />
          <path d="M4 6c-1 5 5 7 6 12 2-4-3-8-3-12 0-1-2-1-3 0z" fill="#fff" />
          <path d="M4 7c-1 6 4 7 5 12-5 1-8-3-8-7 0-2 1-4 3-5z" fill="#f26522" />
        </svg>
        <h1 className="leading-[22px]">1710033793: FirewoodFX-Main - Firewood Global Ltd.</h1>
      </header>
      <nav className="flex h-[25px] items-center gap-[21px] pl-[8px]">
        {menus.map((menu) => (
          <button key={menu} type="button">
            {menu}
          </button>
        ))}
      </nav>
      <StandardToolbar />
      <DrawingToolbar />
      <main className="grid h-[580px] grid-cols-2 overflow-hidden bg-[#666] pt-px pl-px">
        {charts.map((chart) => (
          <ChartWindow key={chart.symbol} chart={chart} />
        ))}
      </main>
      <div className="relative flex flex-1 flex-col border-t-2 border-t-white">
        <ChartTabs />
        <Terminal />
        <div className="pointer-events-none absolute top-[23px] left-[5px] h-[82px] w-[459px] border-[5px] border-[#ed1c24]" />
      </div>
    </div>
  );
}
